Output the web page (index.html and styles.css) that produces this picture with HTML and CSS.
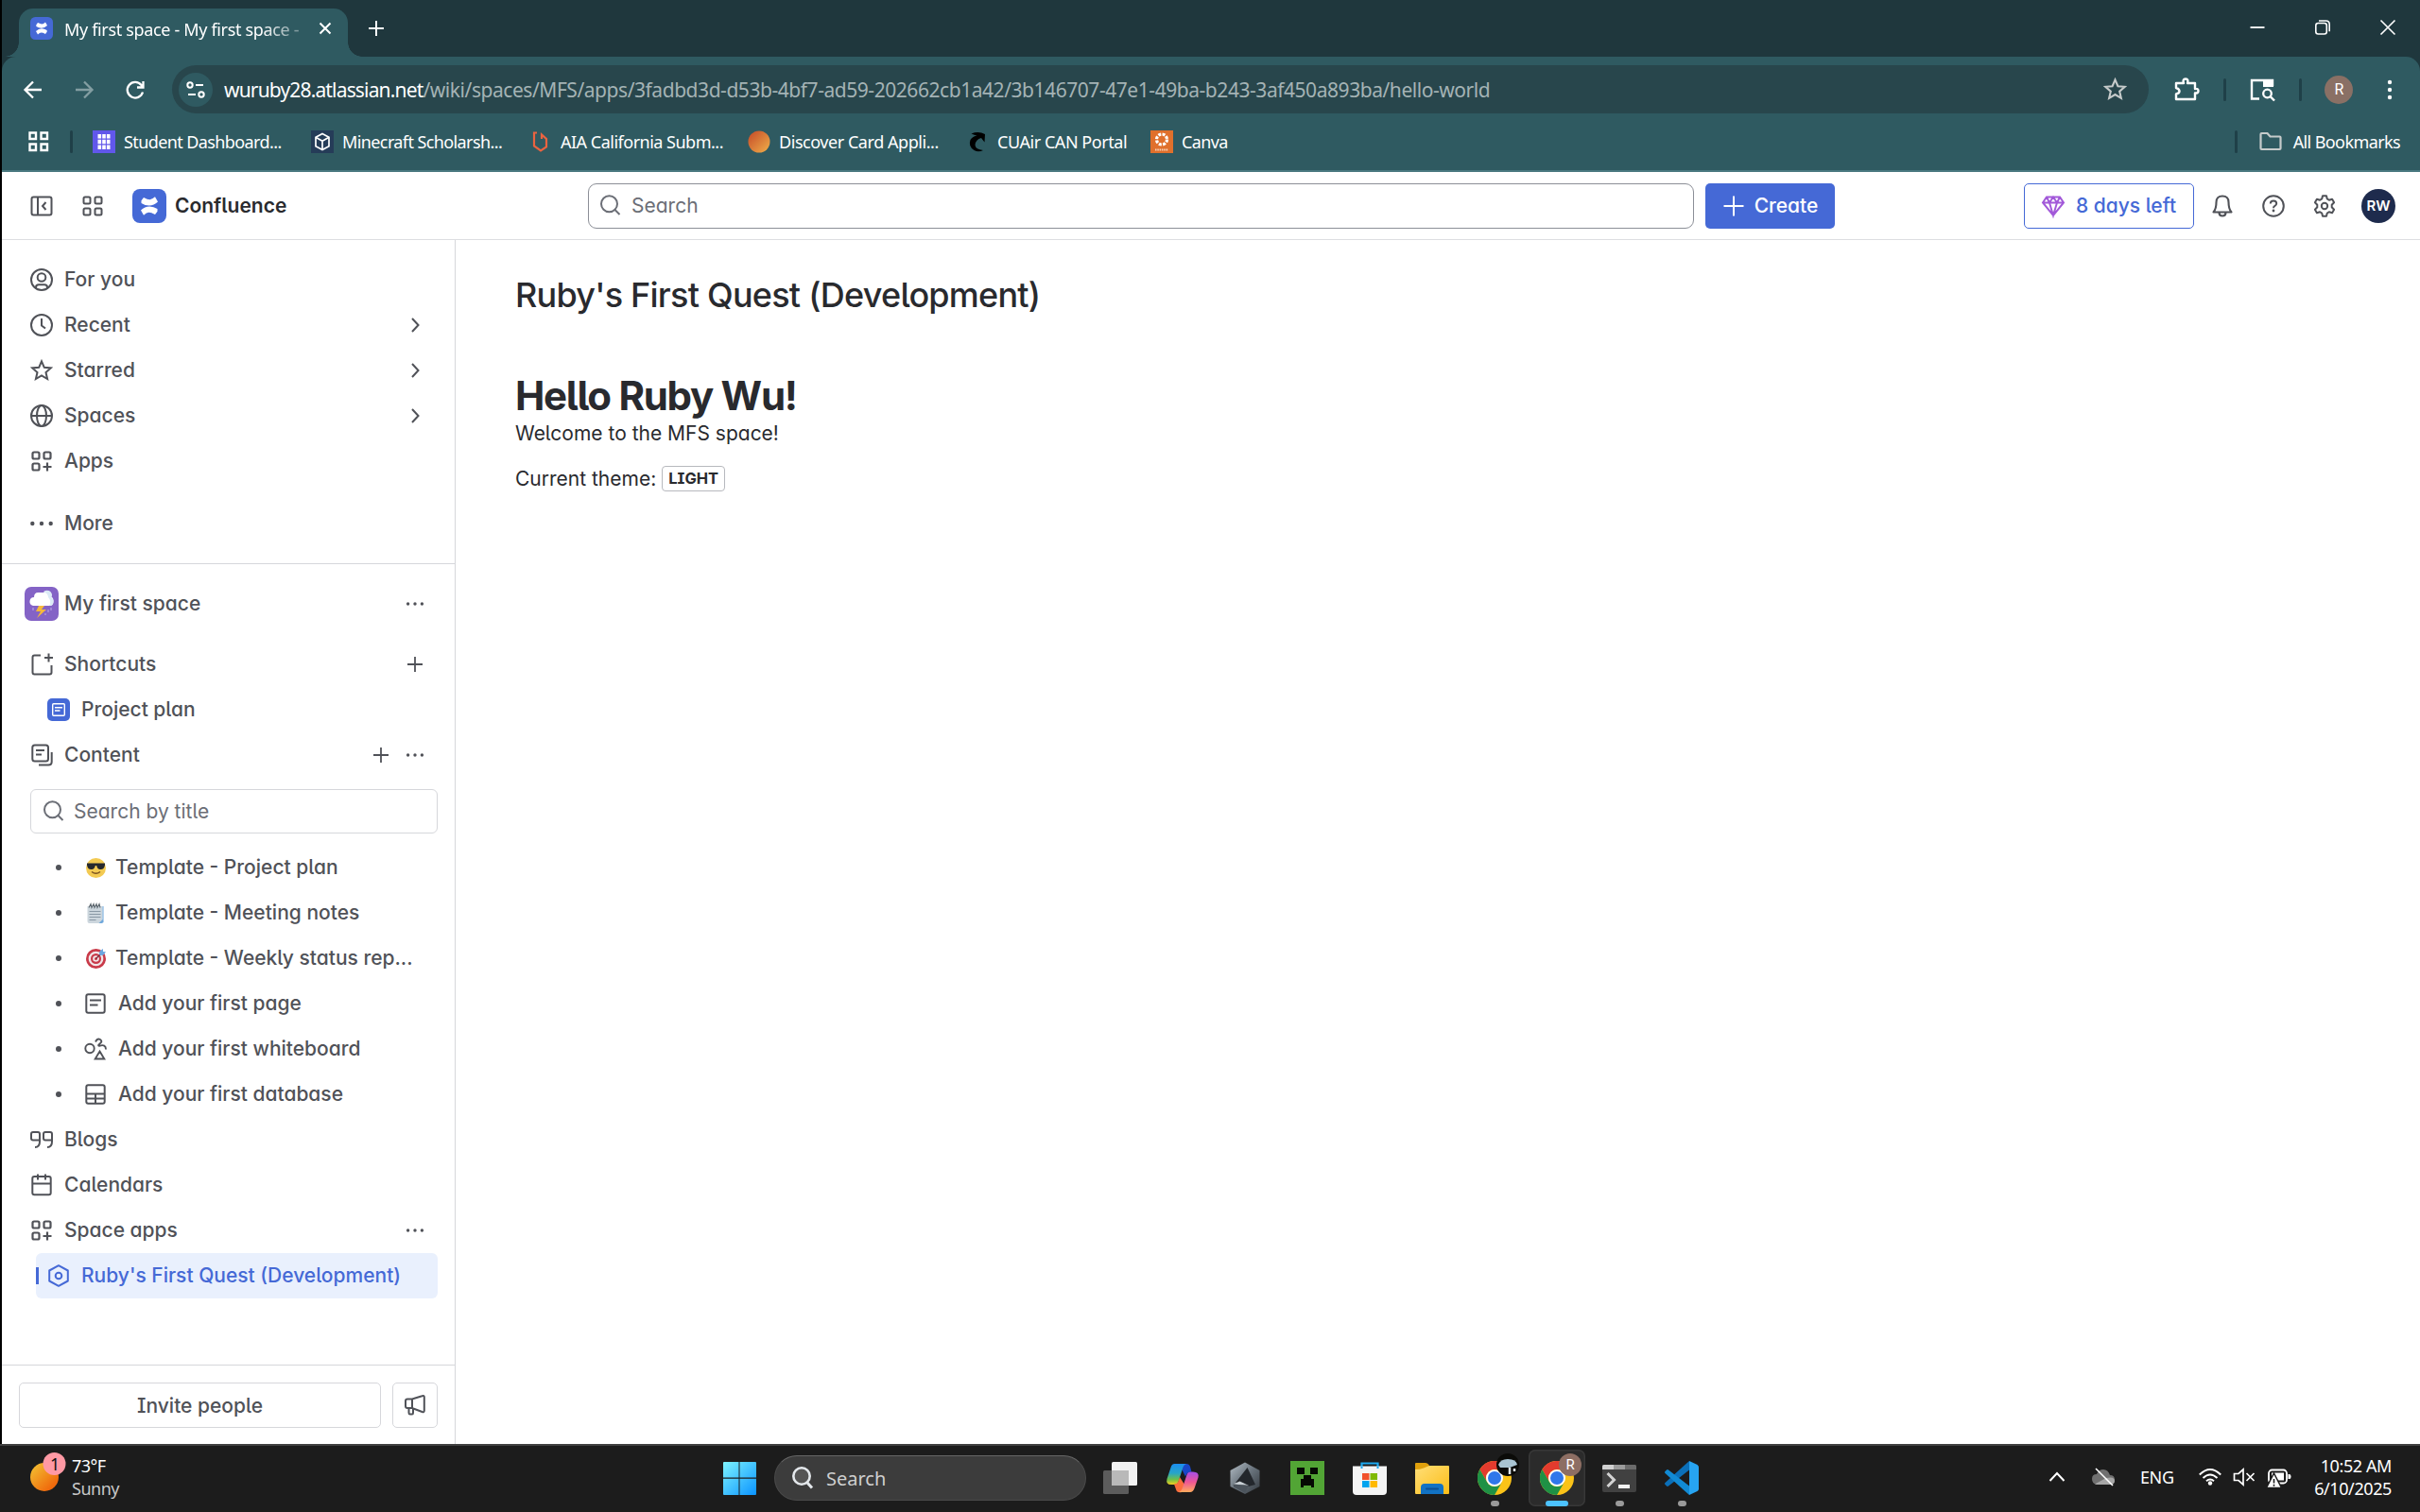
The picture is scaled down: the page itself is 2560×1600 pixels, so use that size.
FILE: index.html
```html
<!DOCTYPE html>
<html lang="en">
<head>
    <meta charset="UTF-8">
    <meta name="viewport" content="width=device-width, initial-scale=1.0">
    <title>My first space - Confluence</title>
    <link rel="stylesheet" href="styles.css">
</head>
<body>
    <!-- shared icons -->
    <svg class="defs" width="0" height="0">
        <defs>
            <linearGradient id="win" x1="0" y1="0" x2="1" y2="1"><stop offset="0" stop-color="#7df3ff"/><stop offset="1" stop-color="#0a93ff"/></linearGradient>
            <linearGradient id="sun" x1="0" y1="0" x2="1" y2="1"><stop offset="0.1" stop-color="#f2bb30"/><stop offset="0.8" stop-color="#f06a0c"/></linearGradient>
            <linearGradient id="disc" x1="0" y1="0" x2="1" y2="1"><stop offset="0.1" stop-color="#c9532b"/><stop offset="1" stop-color="#f0b04a"/></linearGradient>
            <linearGradient id="copA" x1="0" y1="0" x2="0" y2="1"><stop offset="0" stop-color="#1b8df0"/><stop offset="0.45" stop-color="#27a5c8"/><stop offset="0.75" stop-color="#6cc04a"/><stop offset="1" stop-color="#f4cc1e"/></linearGradient>
            <linearGradient id="copB" x1="0" y1="0" x2="0" y2="1"><stop offset="0" stop-color="#a44fe8"/><stop offset="0.5" stop-color="#ee5596"/><stop offset="1" stop-color="#ffab5c"/></linearGradient>
            <linearGradient id="fold" x1="0" y1="0" x2="1" y2="1"><stop offset="0" stop-color="#ffdf78"/><stop offset="1" stop-color="#fbbd17"/></linearGradient>
            <linearGradient id="hexa" x1="0" y1="0" x2="1" y2="1"><stop offset="0" stop-color="#b4bec6"/><stop offset="0.5" stop-color="#68727b"/><stop offset="1" stop-color="#33393f"/></linearGradient>
        </defs>
        <symbol id="i-conf" viewBox="0 0 36 36">
            <rect width="36" height="36" rx="8" fill="#4569d6"/>
            <path fill="#fff" d="M9.500 12.200 12 9q4.300 2.300 6.600 2.200Q21 11 24 8.300l3 5.200q-4.200 4-9.200 4.100-4.300 0-8.300-2.500zM26.500 23.800 24 27q-4.300-2.300-6.600-2.200Q15 25 12 27.700l-3-5.200q4.200-4 9.200-4.100 4.300 0 8.300 2.500z"/>
        </symbol>
        <symbol id="i-grid" viewBox="0 0 24 24"><g fill="none" stroke="currentColor" stroke-width="2"><rect x="2.500" y="2.500" width="7" height="7" rx="1.500"/><rect x="14.500" y="2.500" width="7" height="7" rx="1.500"/><rect x="2.500" y="14.500" width="7" height="7" rx="1.500"/><rect x="14.500" y="14.500" width="7" height="7" rx="1.500"/></g></symbol>
        <symbol id="i-apps" viewBox="0 0 24 24"><g fill="none" stroke="currentColor" stroke-width="2.200"><rect x="2.500" y="2.500" width="7" height="7" rx="1.500"/><rect x="14.500" y="2.500" width="7" height="7" rx="1.500"/><rect x="2.500" y="14.500" width="7" height="7" rx="1.500"/><path d="M18 13.500v9M13.500 18h9"/></g></symbol>
        <symbol id="i-search" viewBox="0 0 24 24"><g fill="none" stroke="currentColor" stroke-width="2"><circle cx="10.500" cy="9.800" r="8.500"/><path d="m16.500 16 5 5"/></g></symbol>
        <symbol id="i-chev" viewBox="0 0 24 24"><path d="m9 5 6.500 7L9 19" fill="none" stroke="currentColor" stroke-width="2"/></symbol>
        <symbol id="i-plus" viewBox="0 0 24 24"><path d="M12 4v16M4 12h16" fill="none" stroke="currentColor" stroke-width="1.800"/></symbol>
        <symbol id="i-dots" viewBox="0 0 24 24"><g fill="currentColor"><circle cx="4.600" cy="12" r="1.700"/><circle cx="12" cy="12" r="1.700"/><circle cx="19.400" cy="12" r="1.700"/></g></symbol>
        <symbol id="i-page" viewBox="0 0 24 24"><g fill="none" stroke="currentColor" stroke-width="2"><rect x="2.300" y="2.300" width="19.400" height="19.400" rx="2"/><path d="M6 8.500h12M6 13.500h8.500"/></g></symbol>
        <symbol id="i-star" viewBox="0 0 24 24"><path d="m12 2.300 2.800 6.500 7 .6-5.300 4.700 1.600 6.900-6.100-3.700L5.900 21l1.600-6.900-5.300-4.700 7-.6z" fill="none" stroke="currentColor" stroke-width="2"/></symbol>
        <symbol id="i-chrome" viewBox="0 0 36 36">
            <circle cx="18" cy="18" r="18" fill="#fbc318"/>
            <path d="M2.400 9A18 18 0 0 1 33.600 9H18a9 9 0 0 0-7.800 13.500z" fill="#e33b2e"/>
            <path d="M2.400 9A18 18 0 0 0 18 36l7.800-13.500a9 9 0 0 1-15.600 0z" fill="#1f9145"/>
            <circle cx="18" cy="18" r="9" fill="#fff"/><circle cx="18" cy="18" r="7" fill="#2f77ea"/>
        </symbol>
    </svg>

    <div class="window">
        <div class="tabstrip">
            <div class="tab">
                <svg width="24" height="24"><use href="#i-conf"/></svg>
                <span class="tab-title">My first space - My first space -</span>
                <svg width="24" height="24" viewBox="0 0 24 24"><path d="m6.500 6.500 11 11m0-11-11 11" stroke="#fff" stroke-width="2"/></svg>
            </div>
            <svg class="new-tab" width="24" height="24" viewBox="0 0 24 24"><path d="M12 4v16M4 12h16" stroke="#fff" stroke-width="2"/></svg>
            <div class="win-buttons">
                <svg width="24" height="24" viewBox="0 0 24 24"><path d="M4.500 12h15" stroke="#fff" stroke-width="1.800"/></svg>
                <svg width="24" height="24" viewBox="0 0 24 24"><g fill="none" stroke="#fff" stroke-width="1.600"><rect x="4.800" y="7.500" width="11.500" height="11.500" rx="2.500"/><path d="M8 5h7.500q3.700 0 3.700 3.700v7.500"/></g></svg>
                <svg width="24" height="24" viewBox="0 0 24 24"><path d="m4.500 4.500 15 15m0-15-15 15" stroke="#fff" stroke-width="1.600"/></svg>
            </div>
        </div>

        <div class="toolbar">
            <svg class="nav" width="24" height="24" viewBox="0 0 24 24"><path d="M21 12H4m8-8.500L3.500 12l8.500 8.500" fill="none" stroke="#fff" stroke-width="2.300"/></svg>
            <svg class="nav" width="24" height="24" viewBox="0 0 24 24"><path d="M3 12h17m-8-8.500 8.500 8.500-8.500 8.500" fill="none" stroke="#839ea2" stroke-width="2.300"/></svg>
            <svg class="nav" width="24" height="24" viewBox="0 0 24 24"><path d="M20 14.500A8.300 8.300 0 1 1 18.500 7l1.500 2M20.500 3v6.500H14" fill="none" stroke="#fff" stroke-width="2.300"/></svg>
            <div class="urlbar">
                <span class="site-info"><svg width="22" height="22" viewBox="0 0 22 22"><g fill="none" stroke="#fff" stroke-width="2"><circle cx="5" cy="6" r="2.700"/><path d="M11 6h8M3 16h8"/><circle cx="17" cy="16" r="2.700"/></g></svg></span>
                <span class="url"><b>wuruby28.atlassian.net</b>/wiki/spaces/MFS/apps/3fadbd3d-d53b-4bf7-ad59-202662cb1a42/3b146707-47e1-49ba-b243-3af450a893ba/hello-world</span>
                <svg class="url-star" width="25" height="25"><use href="#i-star"/></svg>
            </div>
            <div class="tool-icons">
                <svg width="28" height="28" viewBox="0 0 28 28"><path d="M3 7h8q-1.500-4.500 2-4.500T15 7h8v6q3.500-.5 3.500 2.200T23 17.500V24H3v-5.500q3.500-.7 3.500-3T3 12z" fill="none" stroke="#fff" stroke-width="2.400" stroke-linejoin="round"/></svg>
                <i class="sep"></i>
                <svg width="28" height="28" viewBox="0 0 28 28"><path d="M11 23.500H3V4h22v6" fill="none" stroke="#fff" stroke-width="2.400"/><path d="M15 3h11v8H15z" fill="#fff"/><circle cx="19.500" cy="18" r="4.300" fill="none" stroke="#fff" stroke-width="2.300"/><path d="m22.500 21 4.500 4.500" stroke="#fff" stroke-width="2.400"/></svg>
                <i class="sep"></i>
                <span class="profile">R</span>
                <svg class="menu" width="24" height="24" viewBox="0 0 24 24"><g fill="#fff"><circle cx="12" cy="4" r="2.200"/><circle cx="12" cy="12" r="2.200"/><circle cx="12" cy="20" r="2.200"/></g></svg>
            </div>
        </div>

        <div class="bookmarks">
            <svg width="24" height="24" viewBox="0 0 24 24"><g fill="none" stroke="#fff" stroke-width="2.400"><path d="M2.500 2.500h6.500v6.500H2.500zM14.500 2.500h6.500v6.500h-6.500zM2.500 14.500h6.500v6.500H2.500zM14.500 14.500h6.500v6.500h-6.500z"/></g></svg>
            <i class="sep"></i>
            <a class="bm bm1"><svg width="24" height="24" viewBox="0 0 24 24"><path d="M0 0h24v24H0z" fill="#6157ea"/><path d="M5.500 4h3.600v4.500H5.500zM10.200 4h3.600v4.500h-3.600zM14.900 4h3.600v4.500h-3.600zM5.500 9.700h3.600v4.500H5.500zM10.200 9.700h3.600v4.500h-3.600zM14.900 9.700h3.600v4.500h-3.600zM5.500 15.400h3.600V20H5.500zM10.200 15.400h3.600V20h-3.600zM14.900 15.400h3.600V20h-3.600z" fill="#fff"/></svg>Student Dashboard...</a>
            <a class="bm bm2"><svg width="24" height="24" viewBox="0 0 24 24"><path d="M0 0h24v24H0z" fill="#253c58"/><path d="m12 3.500 7 3.800v9.400l-7 3.800-7-3.800V7.300zM5 7.300l7 4 7-4M12 11.300v9" fill="none" stroke="#fff" stroke-width="1.700"/></svg>Minecraft Scholarsh...</a>
            <a class="bm bm3"><svg width="24" height="24" viewBox="0 0 24 24"><path d="M8 2.500H5v14l7 5 6-4V9l-5-4.500V9" fill="none" stroke="#ea6340" stroke-width="2.200"/></svg>AIA California Subm...</a>
            <a class="bm bm4"><svg width="24" height="24" viewBox="0 0 24 24"><circle cx="12" cy="12" r="11.500" fill="url(#disc)"/></svg>Discover Card Appli...</a>
            <a class="bm bm5"><svg width="24" height="24" viewBox="0 0 24 24"><path d="M5.500 3.500Q13 .500 20 4l-.5 8.500-3.500-4.500q-6 1.500-6.500 7.500.5 4.500 8.500 5.500-5 2.500-9.500 0Q2 17 4.500 10 7 6 11.500 5.500 9 5 5.500 3.500z" fill="#000"/></svg>CUAir CAN Portal</a>
            <a class="bm bm6"><svg width="24" height="24" viewBox="0 0 24 24"><path d="M0 0h24v24H0z" fill="#e0702c"/><circle cx="12" cy="9.500" r="5.500" fill="none" stroke="#fff" stroke-width="3.200" stroke-dasharray="3 1.300"/><path d="M5 20.500h14" stroke="#f6d0b6" stroke-width="2" stroke-dasharray="1.500 .8"/></svg>Canva</a>
            <div class="all-bm">
                <i class="sep"></i>
                <svg width="24" height="24" viewBox="0 0 24 24"><path d="M1.500 4q0-1 1-1H8.500l3 3.500h10q1 0 1 1V19q0 1-1 1h-19q-1 0-1-1z" fill="none" stroke="#c6cbcb" stroke-width="2.200"/></svg>
                All Bookmarks
            </div>
        </div>

        <header class="topnav">
            <svg class="i-collapse" width="24" height="24" viewBox="0 0 24 24"><g fill="none" stroke="currentColor" stroke-width="2"><rect x="1.500" y="2.500" width="21" height="19" rx="2"/><path d="M8 2.500v19M16.500 8 13 12l3.500 4"/></g></svg>
            <svg class="i-switch" width="24" height="24"><use href="#i-grid"/></svg>
            <svg class="i-logo" width="36" height="36"><use href="#i-conf"/></svg>
            <span class="brand">Confluence</span>
            <div class="search">
                <svg width="24" height="24"><use href="#i-search"/></svg>
                <span>Search</span>
            </div>
            <button class="create"><svg width="24" height="24" viewBox="0 0 24 24"><path d="M12 1.500v21M1.500 12h21" stroke="#fff" stroke-width="2"/></svg>Create</button>
            <button class="trial">
                <svg width="24" height="24" viewBox="0 0 24 24"><g fill="none" stroke="#a259d9" stroke-width="2"><path d="M5 2.500h14l4 6L12 22 1 8.500zM1 8.500h22M5 2.500l3 6L12 22l4-13.500 3-6M8 8.500l4-6 4 6"/></g></svg>
                8 days left
            </button>
            <div class="top-icons">
                <svg width="24" height="24" viewBox="0 0 24 24"><path d="M2.500 18.500q3-3.500 3-10.500 0-6.500 6.500-6.500T18.500 8q0 7 3 10.500zM8.500 19q0 3.500 3.500 3.500t3.500-3.500" fill="none" stroke="currentColor" stroke-width="2.100" stroke-linejoin="round"/></svg>
                <svg width="24" height="24" viewBox="0 0 24 24"><g fill="none" stroke="currentColor" stroke-width="2"><circle cx="12" cy="12" r="10.800"/><path d="M8.800 9.500q0-3 3.200-3t3.200 2.800q0 1.700-1.700 2.600-1.500.8-1.500 2.300"/></g><circle cx="12" cy="17" r="1.400" fill="currentColor"/></svg>
                <svg width="24" height="24" viewBox="0 0 24 24"><g fill="none" stroke="currentColor" stroke-width="2"><path stroke-linejoin="round" d="M10 1.200h4l.8 3.300 2 1.200 3.300-1 2 3.500L19.700 10.700v2.600l2.400 2.500-2 3.500-3.300-1-2 1.200-.8 3.300h-4l-.8-3.300-2-1.200-3.300 1-2-3.500 2.400-2.500v-2.600L1.900 8.200l2-3.500 3.300 1 2-1.200z"/><circle cx="12" cy="12" r="3.200"/></g></svg>
                <span class="avatar">RW</span>
            </div>
        </header>

        <div class="content">
            <aside class="sidebar">
                <nav class="nav-main">
                    <div class="row"><svg width="24" height="24" viewBox="0 0 24 24"><g fill="none" stroke="currentColor" stroke-width="2"><circle cx="12" cy="12" r="11"/><circle cx="12" cy="9.500" r="4.300"/><path d="M6 21v-1q0-2.700 3-2.700h6q3 0 3 2.700v1"/></g></svg><span>For you</span></div>
                    <div class="row"><svg width="24" height="24" viewBox="0 0 24 24"><g fill="none" stroke="currentColor" stroke-width="2"><circle cx="12" cy="12" r="11"/><path d="M12 5v7.500l4 3"/></g></svg><span>Recent</span><svg class="end" width="24" height="24"><use href="#i-chev"/></svg></div>
                    <div class="row"><svg width="24" height="24"><use href="#i-star"/></svg><span>Starred</span><svg class="end" width="24" height="24"><use href="#i-chev"/></svg></div>
                    <div class="row"><svg width="24" height="24" viewBox="0 0 24 24"><g fill="none" stroke="currentColor" stroke-width="2"><circle cx="12" cy="12" r="11"/><ellipse cx="12" cy="12" rx="5" ry="11"/><path d="M1 12h22"/></g></svg><span>Spaces</span><svg class="end" width="24" height="24"><use href="#i-chev"/></svg></div>
                    <div class="row"><svg width="24" height="24"><use href="#i-apps"/></svg><span>Apps</span></div>
                    <div class="row more"><svg width="24" height="24" viewBox="0 0 24 24"><g fill="currentColor"><circle cx="2.300" cy="12" r="2.200"/><circle cx="12" cy="12" r="2.200"/><circle cx="21.700" cy="12" r="2.200"/></g></svg><span>More</span></div>
                </nav>
                <nav class="nav-space">
                    <div class="row space">
                        <svg width="36" height="36" viewBox="0 0 36 36"><rect width="36" height="36" rx="7" fill="#8463c6"/><path d="M9 20q-4-1-3.500-5T10 11q0-5 4.500-5t5.500 0q4-4 8 0 1 3 0 4 3 2 2.500 6T27 20z" fill="#fff"/><path d="M20 5q5-3 8 1 2 3 0 5 3 2 2.500 5.500T26 20q3-5-1-9 0-4-5-6z" fill="#dbeaf6"/><path d="m15 20-3 6h5l-4 7 10-9h-5l3-4z" fill="#f6b93b"/><path d="M9 22v3M25 24v3M28 22v3M22 28v2" stroke="#a892dd" stroke-width="1.500"/></svg>
                        <span>My first space</span><svg class="end" width="24" height="24"><use href="#i-dots"/></svg>
                    </div>
                    <div class="row"><svg width="24" height="24" viewBox="0 0 24 24"><path d="M11 2.500H4.500q-2 0-2 2v16q0 2 2 2h16q2 0 2-2V13M19.500.500v9M15 5h9" fill="none" stroke="currentColor" stroke-width="2"/></svg><span>Shortcuts</span><svg class="end" width="24" height="24"><use href="#i-plus"/></svg></div>
                    <div class="row sub"><svg width="24" height="24" viewBox="0 0 24 24"><rect width="24" height="24" rx="5" fill="#4569d6"/><g fill="none" stroke="#fff" stroke-width="1.400"><rect x="5.700" y="5.700" width="12.600" height="12.600" rx="1"/><path d="M8 9.800h8M8 13h5.500"/></g></svg><span>Project plan</span></div>
                    <div class="row"><svg width="24" height="24" viewBox="0 0 24 24"><g fill="none" stroke="currentColor" stroke-width="2"><rect x="2.300" y="1.500" width="16.700" height="17" rx="2.500"/><path d="M6 7h9M6 11.500h6M22.700 9v10q0 3.500-3.500 3.500H9"/></g></svg><span>Content</span><svg class="end" width="24" height="24"><use href="#i-plus"/></svg><svg width="24" height="24"><use href="#i-dots"/></svg></div>
                    <div class="title-search"><svg width="24" height="24"><use href="#i-search"/></svg><span>Search by title</span></div>
                    <div class="row item"><svg width="21" height="21" viewBox="0 0 21 21"><circle cx="10.500" cy="10.500" r="10.500" fill="#f3ca52"/><path d="M1 5.500h19v2q-1 5-5 4.500-3 0-3.800-4h-1.400q-.8 4-3.800 4Q2 12.500 1 7.500z" fill="#26282e"/><path d="M6 14.500q4.500 3.500 9 0" fill="none" stroke="#7a5220" stroke-width="1.400"/></svg><span>Template - Project plan</span></div>
                    <div class="row item"><svg width="21" height="21" viewBox="0 0 21 21"><path d="M1.500 3h16v18H3.500q-2 0-2-2z" fill="#ccd6dd"/><path d="M17.500 3h1v17l-2 1h-3l4-4z" fill="#6fa8dc"/><path d="M3.500 8.500h12M3.500 11.500h12M3.500 14.500h12M3.500 17.500h7" stroke="#8a99a6" stroke-width="1.100"/><path d="m3 4.500 2-4 1 4 2-4 1 4 2-4 1 4 2-4 1 4" fill="none" stroke="#5c666e" stroke-width="1.100"/></svg><span>Template - Meeting notes</span></div>
                    <div class="row item"><svg width="21" height="21" viewBox="0 0 21 21"><circle cx="10.500" cy="10.500" r="10.500" fill="#c93a49"/><circle cx="10.500" cy="10.500" r="7.800" fill="#f1e6e8"/><circle cx="10.500" cy="10.500" r="5.500" fill="#c93a49"/><circle cx="10.500" cy="10.500" r="3.300" fill="#f1e6e8"/><circle cx="10.500" cy="10.500" r="1.500" fill="#c93a49"/><path d="m10.500 10.500 6-6" stroke="#7d2d3b" stroke-width="1.300"/><path d="m14 6 .5-3.500L18 0v3l3 .300-2.800 3.400-3.200.3z" fill="#6ba7e0"/></svg><span>Template - Weekly status rep...</span></div>
                    <div class="row item add"><svg width="24" height="24"><use href="#i-page"/></svg><span>Add your first page</span></div>
                    <div class="row item add"><svg width="24" height="24" viewBox="0 0 24 24"><g fill="none" stroke="currentColor" stroke-width="1.900"><circle cx="6" cy="11.500" r="4.700"/><path d="M16.500 14.500 21.300 22.500h-9.600zM12 4.500Q14 .500 17 2q3 2-.5 4.500-2.500 2-.5 2.300Q23 6.500 23 12.500"/></g></svg><span>Add your first whiteboard</span></div>
                    <div class="row item add"><svg width="24" height="24" viewBox="0 0 24 24"><g fill="none" stroke="currentColor" stroke-width="2"><rect x="2.300" y="2.300" width="19.400" height="19.400" rx="2"/><path d="M2 11.500h20M2 16.500h20M12 11.500v10"/></g></svg><span>Add your first database</span></div>
                    <div class="row"><svg width="24" height="24" viewBox="0 0 24 24"><path d="M10 12.500H3q-2 0-2-2V6q0-2 2-2h5q2 0 2 2v8q0 6-5 6M23 12.500h-7q-2 0-2-2V6q0-2 2-2h5q2 0 2 2v8q0 6-5 6" fill="none" stroke="currentColor" stroke-width="2"/></svg><span>Blogs</span></div>
                    <div class="row"><svg width="24" height="24" viewBox="0 0 24 24"><g fill="none" stroke="currentColor" stroke-width="2"><rect x="2.300" y="3" width="19.400" height="19.200" rx="2"/><path d="M2 10.500h20M8 .5v6M16 .5v6"/></g></svg><span>Calendars</span></div>
                    <div class="row"><svg width="24" height="24"><use href="#i-apps"/></svg><span>Space apps</span><svg class="end" width="24" height="24"><use href="#i-dots"/></svg></div>
                    <div class="row selected"><i class="marker"></i><svg width="24" height="24" viewBox="0 0 24 24"><g fill="none" stroke="currentColor" stroke-width="2"><path stroke-linejoin="round" d="M12 1.200 21.800 6.500v11L12 22.800 2.200 17.500v-11z"/><circle cx="12" cy="12" r="3.300"/></g></svg><span>Ruby's First Quest (Development)</span></div>
                </nav>
                <div class="side-foot">
                    <button class="invite"><span>Invite people</span></button>
                    <button class="horn"><svg width="24" height="24" viewBox="0 0 24 24"><path d="M9 5.500H4q-2 0-2 2V13q0 2 2 2h5l10.500 4q2.300.8 2.300-1.200V3.500q0-2-2.300-1.200zM9 5.500V15M5.500 15v5q0 1.500 1.300 1.500H9q1 0 1-1.500v-4.500" fill="none" stroke="currentColor" stroke-width="2"/></svg></button>
                </div>
            </aside>
            <main class="page">
                <h1>Ruby's First Quest (Development)</h1>
                <h2>Hello Ruby Wu!</h2>
                <p>Welcome to the MFS space!</p>
                <p class="theme">Current theme: <span class="lozenge">LIGHT</span></p>
            </main>
        </div>
    </div>

    <footer class="taskbar">
        <div class="weather">
            <svg width="38" height="44" viewBox="0 0 38 44"><circle cx="15" cy="27" r="15" fill="url(#sun)"/><circle cx="25.500" cy="13" r="12" fill="#ff99a4"/></svg>
            <span class="count">1</span>
            <div><div>73°F</div><div class="dim">Sunny</div></div>
        </div>
        <div class="dock">
            <svg class="start" width="36" height="36" viewBox="0 0 36 36"><path d="M1 2q0-1 1-1h15.500v16.500H1zM18.500 1H35q1 0 1 1v15.500H18.500zM1 18.800h16.500V36H2q-1 0-1-1zM18.500 18.800H36V35q0 1-1 1H18.500z" fill="url(#win)"/></svg>
            <div class="tb-search"><svg width="26" height="26" viewBox="0 0 26 26"><circle cx="12" cy="11" r="8.700" fill="#555" stroke="#e4e8ec" stroke-width="2.600"/><path d="m18 18 5 5.500" stroke="#e4e8ec" stroke-width="3"/></svg><span>Search</span></div>
            <div class="app"><svg width="36" height="36" viewBox="0 0 36 36"><rect y="10" width="27" height="25" rx="1.500" fill="#5c5c5c"/><rect x="9" y="1" width="27" height="25" rx="1.500" fill="#f2f2f2"/><path d="M9 10h18v16H9z" fill="#b9b9b9"/></svg></div>
            <div class="app"><svg width="36" height="36" viewBox="0 0 36 36"><path d="M16 3h6q3 0 4 3l1.500 5.500q-5 0-6.500 5l-4-8z" fill="#1846c8"/><path d="M9.500 3H22q-3 1-4 5l-4.500 14q-1 3-4 3H6q-6 0-4.500-6l4-12q1-4 4-4z" fill="url(#copA)"/><path d="M9 24.500q3.500 0 4.500-3l1.500-4.500 5 8-3 8q-5 1-6-3z" fill="#fb6d3d"/><path d="M26 33H14q3-1 4-5l4.500-13.500q1-3 4-3H29q7 0 5.500 6l-4 11.500q-1.500 4-4.500 4z" fill="url(#copB)"/></svg></div>
            <div class="app"><svg width="36" height="36" viewBox="0 0 36 36"><path d="m18 1.500 15.500 8.500v17L18 35 2.500 27V10z" fill="url(#hexa)"/><path d="m20.500 7 8.500 18-7.500 2L8 23z" fill="#23272c"/><path d="m5.500 24.500 7-3 9.500 4.500z" fill="#c9d0d5"/><path d="M5.500 24.500 22 26l-4 7.500-12-6z" fill="#4b535b"/></svg></div>
            <div class="app"><svg width="36" height="36" viewBox="0 0 36 36"><path d="M0 0h36v36H0z" fill="#52a535"/><path d="M7 7h8v7H7zM21 7h8v7h-8zM14 15h8v4h3v9h-3v-2h-8v2h-3v-9h3z" fill="#050a03"/></svg></div>
            <div class="app"><svg width="36" height="36" viewBox="0 0 36 36"><path d="M9.500 8V2.500h17V8" fill="none" stroke="#1ea9ef" stroke-width="2.200"/><path d="M0 5.500h36V32q0 4-4 4H4q-4 0-4-4z" fill="#f4f4f4"/><path d="M9.500 8V5.500M26.500 8V5.500" stroke="#1ea9ef" stroke-width="2"/><path d="M10 13h7.500v7H10z" fill="#f1502b"/><path d="M18.500 13H26v7h-7.500z" fill="#7fb900"/><path d="M10 21h7.500v7H10z" fill="#02a4ef"/><path d="M18.500 21H26v7h-7.500z" fill="#ffb901"/></svg></div>
            <div class="app"><svg width="36" height="36" viewBox="0 0 36 36"><path d="M0 3q0-1 1-1h10q2 0 3 1.500L15 5v5H0z" fill="#dfa00c"/><path d="M0 9q5 0 9-1.500L15 5h20q1 0 1 1v28q0 1-1 1H1q-1 0-1-1z" fill="url(#fold)"/><path d="M6 35v-7q0-4 4-4h16q4 0 4 4v7z" fill="#1272c4"/><path d="M12 29.500h12" stroke="#0b4f94" stroke-width="2" stroke-linecap="round"/></svg></div>
            <div class="app run"><svg width="36" height="36"><use href="#i-chrome"/></svg><svg class="badge" width="24" height="24" viewBox="0 0 24 24"><circle cx="12" cy="12" r="12" fill="#0b0b08"/><path d="M2 12q2-6 10-6 9 0 10 6l-8 3H4z" fill="#a9c5d3"/><path d="M14 15v7M19 16v3" stroke="#dfe6ea" stroke-width="2.500"/></svg></div>
            <div class="app run active"><svg width="36" height="36"><use href="#i-chrome"/></svg><span class="badge who">R</span></div>
            <div class="app run"><svg width="36" height="36" viewBox="0 0 36 36"><rect y="4" width="36" height="29" rx="2" fill="#414141"/><path d="M0 9V5.500Q0 4 1.500 4H12v5z" fill="#d0d0d0"/><path d="M12 4h12v5H12z" fill="#9b9b9b"/><path d="M24 4h10.500Q36 4 36 5.500V9H24z" fill="#6b6b6b"/><path d="m5.500 13 7 7-7 7" fill="none" stroke="#d2d2d2" stroke-width="3"/><path d="M17 25h12v4H17z" fill="#f2f2f2"/></svg></div>
            <div class="app run"><svg width="36" height="36" viewBox="0 0 36 36"><path d="M26 0v9.500L4 26.500q-1 .8-2 0l-1.500-1.500q-1-1 0-2z" fill="#0b6fb8"/><path d="M26 36v-9.500L4 9.500q-1-.8-2 0L.500 11q-1 1 0 2z" fill="#118ad4"/><path d="m26 0 8.500 4Q36 5 36 6.500v23q0 1.500-1.500 2.500L26 36z" fill="#27a4f2"/></svg></div>
        </div>
        <div class="tray">
            <svg width="24" height="24" viewBox="0 0 24 24"><path d="m4.500 16 7.500-8 7.500 8" fill="none" stroke="#fff" stroke-width="2"/></svg>
            <svg class="t-cloud" width="26" height="24" viewBox="0 0 26 24"><path d="M6 20q-5-1-5-6t5-5q2-5 7-5t7 6q5 0 5 5t-5 5z" fill="#707070"/><path d="M4 19.500 16 13q9-2 9 3 0 4-5 4H6z" fill="#a6a6a6"/><path d="m5 3 18 18" stroke="#fff" stroke-width="1.600"/></svg>
            <span class="lang">ENG</span>
            <svg width="24" height="24" viewBox="0 0 24 24"><g fill="none" stroke="#fff" stroke-width="2"><path d="M.8 9.500q11.200-11 22.400 0M4.500 13q7.500-7 15 0M8 16.300q4-3.500 8 0"/></g><circle cx="12" cy="18.500" r="2.200" fill="#fff"/></svg>
            <svg class="t-vol" width="24" height="24" viewBox="0 0 24 24"><path d="M11 4v16l-5-4.500H1.500v-7H6zM14.500 8l8 8m0-8-8 8" fill="none" stroke="#fff" stroke-width="1.700"/></svg>
            <svg class="t-bat" width="26" height="24" viewBox="0 0 26 24"><rect x="2" y="4.500" width="19" height="14" rx="3.500" fill="none" stroke="#fff" stroke-width="1.800"/><path d="M5 7.500h13v8H5z" fill="#fff"/><path d="M22.500 9h1.500q1.500 0 1.500 2.500T24 14h-1.500z" fill="#fff"/><path d="m7.500 8 8 15.500H-.500z" fill="#fff" stroke="#1c1c1c" stroke-width="1.500"/><path d="M7.500 14v4.500m0 1.200v2" stroke="#1c1c1c" stroke-width="1.600"/></svg>
            <div class="clock"><div>10:52 AM</div><div>6/10/2025</div></div>
        </div>
    </footer>
</body>
</html>
```

FILE: styles.css
```css
* {
    box-sizing: border-box;
}
body {
    margin: 0;
    width: 2560px;
    height: 1600px;
    overflow: hidden;
    display: flex;
    flex-direction: column;
    background: #000;
    font-family: "Noto Sans", "Open Sans", sans-serif;
    font-size: 18px;
    color: #fff;
}
svg {
    display: block;
    flex: none;
    overflow: visible;
}
.defs {
    position: absolute;
}
button {
    font: inherit;
    padding: 0;
}
.window {
    height: 1528px;
    border-left: 2px solid #000;
    background: #1f373d;
    display: flex;
    flex-direction: column;
}

/* browser chrome */
.tabstrip {
    height: 60px;
    display: flex;
    align-items: flex-start;
}
.tab {
    position: relative;
    width: 348px;
    height: 51px;
    margin: 9px 0 0 18px;
    padding: 9px 12px 0;
    display: flex;
    align-items: flex-start;
    background: #2f5a61;
    border-radius: 15px 15px 0 0;
}
.tab::before,
.tab::after {
    content: "";
    position: absolute;
    bottom: 0;
    width: 15px;
    height: 15px;
    background: radial-gradient(circle at 0 0, transparent 14.5px, #2f5a61 15px);
}
.tab::before {
    left: -15px;
}
.tab::after {
    right: -15px;
    background: radial-gradient(circle at 100% 0, transparent 14.5px, #2f5a61 15px);
}
.tab-title {
    flex: none;
    width: 276px;
    padding-left: 12px;
    line-height: 26px;
    letter-spacing: -0.34px;
    white-space: nowrap;
    -webkit-mask-image: linear-gradient(90deg, #000 80%, rgba(0, 0, 0, 0.4) 93%);
    mask-image: linear-gradient(90deg, #000 80%, rgba(0, 0, 0, 0.4) 93%);
}
.new-tab {
    margin: 18px 0 0 18px;
}
.win-buttons {
    margin: 17px 22px 0 auto;
    display: flex;
    gap: 45px;
}
.toolbar {
    height: 69px;
    background: #2f5a61;
    border-radius: 15px 15px 0 0;
    display: flex;
    align-items: center;
    padding: 0 20px 0 21px;
}
.nav {
    margin-right: 30px;
}
.urlbar {
    width: 2091px;
    height: 51px;
    margin-left: -3px;
    border-radius: 26px;
    background: #28464c;
    display: flex;
    align-items: center;
    padding-left: 7px;
}
.site-info {
    width: 36px;
    height: 36px;
    border-radius: 50%;
    background: #2f5a61;
    display: flex;
    align-items: center;
    justify-content: center;
}
.url {
    margin-left: 12px;
    font-size: 21px;
    letter-spacing: -0.45px;
    color: #a4b3b5;
    white-space: nowrap;
}
.url b {
    font-weight: 400;
    letter-spacing: -0.84px;
    color: #fff;
}
.url-star {
    margin: 0 23px 0 auto;
    color: #c6cbcb;
}
.tool-icons {
    flex: 1;
    display: flex;
    align-items: center;
    justify-content: space-between;
    margin-left: 26px;
}
.menu {
    margin-left: 2px;
}
.sep {
    width: 3px;
    height: 24px;
    border-radius: 2px;
    background: #1f4048;
}
.profile {
    width: 30px;
    height: 30px;
    border-radius: 50%;
    background: #8a7065;
    font: 16px/30px Roboto, sans-serif;
    text-align: center;
}
.bookmarks {
    height: 53px;
    background: #2f5a61;
    border-bottom: 2px solid #4a7980;
    display: flex;
    align-items: center;
    padding: 0 21px 10px 27px;
    letter-spacing: -0.6px;
    white-space: nowrap;
}
.bookmarks > .sep {
    margin-left: 21px;
}
.bm {
    display: flex;
    align-items: center;
    gap: 9px;
    width: 231px;
}
.bm1 {
    margin-left: 21px;
}
.bm3 {
    letter-spacing: -0.5px;
}
.bm4 {
    letter-spacing: -0.45px;
}
.bm5 {
    width: 195px;
    letter-spacing: -0.45px;
}
.bm6 {
    width: auto;
}
.all-bm {
    margin-left: auto;
    display: flex;
    align-items: center;
}
.all-bm svg {
    margin: 0 12px 0 23px;
}

/* confluence top bar */
.topnav,
.content {
    font-family: Inter, "Liberation Sans", sans-serif;
    font-feature-settings: "cv11", "cv08", "cv05";
    font-size: 21px;
    background: #fff;
    color: #505258;
}
.topnav {
    height: 72px;
    border-bottom: 1.500px solid #dddee1;
    display: flex;
    align-items: center;
    padding: 0 26px 0 30px;
}
.i-switch {
    margin-left: 30px;
}
.i-logo {
    margin-left: 30px;
}
.brand {
    width: 446px;
    padding-left: 9px;
    font-weight: 600;
    color: #292a2e;
}
.search {
    width: 1170px;
    height: 48px;
    border: 1.500px solid #8c8f97;
    border-radius: 9px;
    display: flex;
    align-items: center;
    gap: 10px;
    padding-left: 11px;
    color: #6b6e76;
}
.create {
    width: 137px;
    height: 48px;
    margin-left: 12px;
    border: 0;
    border-radius: 5px;
    background: #4569d6;
    color: #fff;
    font-weight: 500;
    display: flex;
    align-items: center;
    justify-content: center;
    gap: 10px;
}
.trial {
    width: 180px;
    height: 48px;
    margin-left: auto;
    border: 1.500px solid #4569d6;
    border-radius: 5px;
    background: #fff;
    color: #4569d6;
    font-weight: 500;
    display: flex;
    align-items: center;
    justify-content: center;
    gap: 12px;
}
.top-icons {
    margin-left: 18px;
    display: flex;
    align-items: center;
    gap: 30px;
}
.avatar {
    width: 36px;
    height: 36px;
    margin-left: -3px;
    border-radius: 50%;
    background: #1e2b4d;
    color: #fff;
    font-size: 15px;
    font-weight: 600;
    line-height: 36px;
    text-align: center;
}

/* sidebar */
.content {
    flex: 1;
    display: flex;
    min-height: 0;
}
.sidebar {
    width: 480px;
    border-right: 1px solid #d6d7db;
    display: flex;
    flex-direction: column;
    font-weight: 500;
}
.nav-main {
    padding: 18px 12px 18px;
    border-bottom: 1px solid #d6d7db;
}
.nav-space {
    flex: 1;
    padding: 18px 18px 0 12px;
}
.row {
    height: 48px;
    display: flex;
    align-items: center;
    gap: 12px;
    padding: 0 12px 0 18px;
    white-space: nowrap;
}
.row span {
    padding-bottom: 1px;
}
.nav-main .row {
    padding-right: 18px;
}
.end {
    margin-left: auto;
}
.more {
    margin-top: 18px;
}
.space {
    padding-left: 12px;
    gap: 6px;
    margin-bottom: 16px;
}
.sub {
    padding-left: 36px;
}
.title-search {
    height: 47px;
    margin: 12px 0 12px 18px;
    border: 1px solid #d6d7db;
    border-radius: 6px;
    display: flex;
    align-items: center;
    gap: 9px;
    padding-left: 12px;
    color: #6b6e76;
    font-weight: 400;
}
.item {
    padding-left: 45px;
    gap: 10px;
}
.item::before {
    content: "";
    width: 6px;
    height: 6px;
    margin-right: 16px;
    border-radius: 50%;
    background: #505258;
}
.add {
    gap: 12px;
}
.add::before {
    margin-right: 12px;
}
.selected {
    margin-left: 24px;
    padding-left: 0;
    border-radius: 6px;
    background: #e9f0fd;
    color: #4569d6;
}
.marker {
    width: 3px;
    height: 18px;
    margin-right: -3px;
    background: #4569d6;
}
.side-foot {
    height: 84px;
    border-top: 1px solid #d6d7db;
    padding: 18px 18px 0;
    display: flex;
    gap: 12px;
}
.side-foot button {
    height: 48px;
    border: 1px solid #d6d7db;
    border-radius: 5px;
    background: #fff;
    color: #505258;
    display: flex;
    align-items: center;
    justify-content: center;
}
.invite {
    flex: 1;
}
.horn {
    width: 48px;
}

/* page */
.page {
    flex: 1;
    padding: 34px 63px;
    color: #292a2e;
}
.page h1 {
    margin: 0;
    font-size: 36px;
    font-weight: 500;
    line-height: 48px;
    letter-spacing: -0.76px;
}
.page h2 {
    margin: 59px 0 0;
    font-size: 42px;
    font-weight: 700;
    line-height: 48px;
    letter-spacing: -1.3px;
}
.page p {
    margin: 0;
    line-height: 31px;
}
.page .theme {
    margin-top: 17px;
    display: flex;
    align-items: center;
    gap: 6px;
}
.lozenge {
    height: 27px;
    padding: 0 6px;
    border: 1.500px solid #b7b9be;
    border-radius: 4px;
    font-size: 16.500px;
    font-weight: 700;
    line-height: 25px;
}

/* taskbar */
.taskbar {
    height: 72px;
    border-top: 2px solid #404040;
    background: #1c1c1c;
    display: flex;
    align-items: flex-start;
}
.weather {
    position: relative;
    display: flex;
    padding: 6px 0 0 32px;
    gap: 6px;
    line-height: 24px;
    letter-spacing: -0.5px;
    width: 764px;
}
.weather > div {
    padding-top: 3px;
}
.count {
    position: absolute;
    left: 46px;
    top: 7px;
    width: 24px;
    text-align: center;
    color: #111;
}
.dim {
    color: #c8c8c8;
}
.dock {
    display: flex;
    padding-top: 4px;
    align-items: center;
}
.tb-search {
    width: 330px;
    height: 48px;
    margin-left: 19px;
    border: 1.500px solid #4a4a4a;
    border-top-color: #666;
    border-radius: 24px;
    background: #3c3c3c;
    display: flex;
    align-items: center;
    gap: 12px;
    padding-left: 16px;
    font-size: 20px;
    color: #cfcfcf;
}
.app {
    position: relative;
    width: 60px;
    height: 60px;
    margin-left: 6px;
    display: flex;
    align-items: center;
    justify-content: center;
}
.run::after {
    content: "";
    position: absolute;
    bottom: 0;
    left: 26px;
    width: 9px;
    height: 6px;
    border-radius: 3px;
    background: #9a9a9a;
}
.active {
    background: #2b2b2b;
    border-radius: 7px;
    box-shadow: inset 0 0 0 1.500px #383838;
}
.active::after {
    left: 18px;
    width: 24px;
    background: #4cc2ff;
}
.badge {
    position: absolute;
    left: 32px;
    top: 4px;
}
.who {
    width: 24px;
    height: 24px;
    border-radius: 50%;
    background: #8d6e63;
    font: 15px/24px Roboto, sans-serif;
    text-align: center;
}
.tray {
    margin-left: auto;
    display: flex;
    align-items: center;
    padding: 9px 30px 0 0;
    line-height: 24px;
    letter-spacing: -0.4px;
}
.t-cloud {
    margin-left: 24px;
}
.lang {
    width: 62px;
    margin-left: 26px;
}
.t-vol {
    margin-left: 12px;
}
.t-bat {
    margin-left: 12px;
}
.clock {
    width: 106px;
    text-align: right;
}
```
